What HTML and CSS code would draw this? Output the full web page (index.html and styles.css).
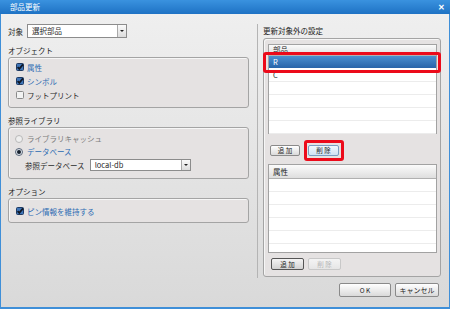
FILE: index.html
```html
<!DOCTYPE html>
<html lang="ja">
<head>
    <meta charset="UTF-8">
    <title>部品更新</title>
    <link rel="stylesheet" href="styles.css">
</head>
<body>
    <div class="window">
        <div class="titlebar">
            <span class="title">部品更新</span>
            <span class="close">✕</span>
        </div>

        <div class="content">
            <!-- left side -->
            <div class="left">
                <div class="target-row">
                    <span class="text">対象</span>
                    <div class="select target-select">
                        <span class="select-value">選択部品</span>
                        <span class="drop"><span class="arrow"></span></span>
                    </div>
                </div>

                <div class="group-label">オブジェクト</div>
                <div class="group group-object">
                    <div class="item checked">
                        <svg class="check" width="8" height="8" viewBox="0 0 8 8"><rect x="0.5" y="0.5" width="7" height="7" rx="1" fill="#3f75b8" stroke="#1e3a63"/><path d="M1.6 4.1 L3.3 5.9 L7 1.4" fill="none" stroke="#0e1726" stroke-width="1.7"/></svg>
                        <span>属性</span>
                    </div>
                    <div class="item checked">
                        <svg class="check" width="8" height="8" viewBox="0 0 8 8"><rect x="0.5" y="0.5" width="7" height="7" rx="1" fill="#3f75b8" stroke="#1e3a63"/><path d="M1.6 4.1 L3.3 5.9 L7 1.4" fill="none" stroke="#0e1726" stroke-width="1.7"/></svg>
                        <span>シンボル</span>
                    </div>
                    <div class="item">
                        <svg class="check" width="8" height="8" viewBox="0 0 8 8"><rect x="0.5" y="0.5" width="7" height="7" rx="1" fill="#f2f2f2" stroke="#8a8a8a"/></svg>
                        <span>フットプリント</span>
                    </div>
                </div>

                <div class="group-label">参照ライブラリ</div>
                <div class="group group-library">
                    <div class="item radio disabled">
                        <svg class="check" width="8" height="8" viewBox="0 0 8 8"><circle cx="4" cy="4" r="3.5" fill="#eeeeee" stroke="#b8b8b8"/></svg>
                        <span>ライブラリキャッシュ</span>
                    </div>
                    <div class="item radio checked">
                        <svg class="check" width="8" height="8" viewBox="0 0 8 8"><circle cx="4" cy="4" r="3.5" fill="#dde3ea" stroke="#5a6678"/><circle cx="4" cy="4" r="2" fill="#16202e"/></svg>
                        <span>データベース</span>
                    </div>
                    <div class="db-row">
                        <span class="text">参照データベース</span>
                        <div class="select db-select">
                            <span class="select-value">local-db</span>
                            <span class="drop"><span class="arrow"></span></span>
                        </div>
                    </div>
                </div>

                <div class="group-label">オプション</div>
                <div class="group group-option">
                    <div class="item checked">
                        <svg class="check" width="8" height="8" viewBox="0 0 8 8"><rect x="0.5" y="0.5" width="7" height="7" rx="1" fill="#3f75b8" stroke="#1e3a63"/><path d="M1.6 4.1 L3.3 5.9 L7 1.4" fill="none" stroke="#0e1726" stroke-width="1.7"/></svg>
                        <span>ピン情報を維持する</span>
                    </div>
                </div>
            </div>

            <!-- right side -->
            <div class="right">
                <div class="right-title">更新対象外の設定</div>
                <div class="group right-group">
                    <div class="list list-parts">
                        <div class="list-header">部品</div>
                        <div class="row selected">R</div>
                        <div class="row">C</div>
                        <div class="row"></div>
                        <div class="row"></div>
                        <div class="row"></div>
                        <div class="row"></div>
                        <div class="mark mark-row"></div>
                    </div>
                    <div class="btn-row btn-row-top">
                        <button class="btn small">追 加</button>
                        <button class="btn small hover">削 除<span class="mark mark-btn"></span></button>
                    </div>
                    <div class="list list-attr">
                        <div class="list-header">属性</div>
                        <div class="row"></div>
                        <div class="row"></div>
                        <div class="row"></div>
                        <div class="row"></div>
                        <div class="row"></div>
                        <div class="row"></div>
                    </div>
                    <div class="btn-row btn-row-bottom">
                        <button class="btn small pressed">追 加</button>
                        <button class="btn small" disabled>削 除</button>
                    </div>
                </div>
            </div>
        </div>

        <div class="footer">
            <button class="btn ok">O K</button>
            <button class="btn cancel">キャンセル</button>
        </div>
    </div>
</body>
</html>
```

FILE: styles.css
```css
/* dialog base */
html, body {
    margin: 0;
    padding: 0;
}

body {
    width: 450px;
    height: 309px;
    font-family: "Noto Sans CJK JP", "Noto Sans", sans-serif;
    font-size: 7.5px;
    color: #2b2b2b;
    overflow: hidden;
}

.window {
    width: 450px;
    height: 309px;
    box-sizing: border-box;
    border-left: 1px solid #3f8fd8;
    border-right: 1px solid #3f8fd8;
    border-bottom: 2px solid #3f8fd8;
    background: linear-gradient(#f0f0f0, #d9d9d9);
}

.titlebar {
    height: 14px;
    margin-left: -1px;
    margin-right: -1px;
    background: linear-gradient(#3a92df, #1e72c4);
    color: #fff;
    display: flex;
    align-items: center;
    justify-content: space-between;
    padding: 0 5px 0 10px;
}

.title {
    font-size: 7.5px;
    line-height: 14px;
}

.close {
    font-size: 8px;
    font-weight: bold;
    line-height: 14px;
}

.content {
    display: flex;
    padding: 10px 0 0 7px;
}

/* left column */
.left {
    width: 241px;
}

.target-row {
    display: flex;
    align-items: center;
    height: 14px;
    gap: 4px;
}

.text {
    white-space: nowrap;
}

.select {
    display: flex;
    align-items: center;
    box-sizing: border-box;
    background: #fff;
    border: 1px solid #8c8c8c;
    height: 14px;
}

.select-value {
    flex: 1;
    padding-left: 4px;
    line-height: 12px;
}

.drop {
    width: 9px;
    height: 12px;
    box-sizing: border-box;
    border-left: 1px solid #a9a9a9;
    background: linear-gradient(#fafafa, #dcdcdc);
    display: flex;
    align-items: center;
    justify-content: center;
}

.arrow {
    width: 0;
    height: 0;
    border-left: 2px solid transparent;
    border-right: 2px solid transparent;
    border-top: 2px solid #222;
}

.target-select {
    width: 100px;
}

.group-label {
    height: 10px;
    line-height: 10px;
    margin-top: 8px;
    margin-bottom: 1px;
    color: #222;
}

.group {
    box-sizing: border-box;
    border: 1px solid #a4a4a4;
    border-radius: 3px;
    background: #e5e2e2;
    box-shadow: inset 1px 1px 0 #f6f6f6;
}

.item {
    display: flex;
    align-items: center;
    gap: 3px;
    height: 14px;
    white-space: nowrap;
}

.check {
    flex: none;
}

.item.checked span {
    color: #2a6ab2;
}

.item.disabled span {
    color: #7d7d7d;
}

.group-object {
    padding: 2px 7px 5px 7px;
}

.group-library {
    padding: 4px 7px 6px 6px;
}

.group-library .item {
    height: 13px;
    gap: 4px;
}

.db-row {
    display: flex;
    align-items: center;
    height: 14px;
    padding-left: 10px;
    gap: 5px;
}

.db-select {
    width: 101px;
    height: 12px;
}

.db-select .drop {
    height: 10px;
}

.group-label:nth-of-type(3) {
    margin-top: 7px;
    margin-bottom: 0;
}

.group-option {
    padding: 5px 7px 4px 7px;
}

/* right column */
.right {
    width: 184px;
    box-sizing: border-box;
    margin-left: 8px;
    border-left: 1px solid #b4b4b4;
    padding: 2px 0 1px 5px;
}

.right-title {
    height: 10px;
    line-height: 10px;
    margin-bottom: 2px;
    color: #222;
}

.right-group {
    height: 239px;
    padding: 5px 3px 0 4px;
}

.list {
    position: relative;
    box-sizing: border-box;
    background: #fff;
    border: 1px solid #a2a2a2;
}

.list-header {
    box-sizing: border-box;
    padding-left: 4px;
    background: linear-gradient(#fbfbfb, #dedede);
    border-bottom: 1px solid #b0b0b0;
    color: #222;
}

.row {
    box-sizing: border-box;
    height: 13px;
    line-height: 12px;
    padding-left: 4px;
    border-bottom: 1px solid #ececec;
}

.row.selected {
    background: linear-gradient(#4a8fd0, #2864a9);
    color: #fff;
    border-bottom-color: #fff;
}

.list-parts {
    height: 90px;
}

.list-parts .list-header {
    height: 11px;
    line-height: 10px;
}

.list-attr {
    height: 89px;
    margin-top: 8px;
    overflow: hidden;
}

.list-attr .list-header {
    height: 14px;
    line-height: 13px;
}

.btn-row {
    display: flex;
    gap: 8px;
    padding-left: 2px;
}

.btn-row-top {
    margin-top: 11px;
}

.btn-row-bottom {
    margin-top: 5px;
    padding-left: 3px;
    gap: 4px;
}

.btn {
    position: relative;
    box-sizing: border-box;
    font-family: "Noto Sans CJK JP", "Noto Sans", sans-serif;
    font-size: 6.5px;
    color: #222;
    padding: 0;
    border: 1px solid #8a8a8a;
    border-radius: 2px;
    background: linear-gradient(#ffffff, #dadada);
}

.btn.small {
    width: 30px;
    height: 11px;
    line-height: 9px;
}

.btn-row-bottom .btn.small {
    width: 33px;
    height: 12px;
}

.btn.hover {
    width: 31px;
    background: linear-gradient(#f2f8fd, #cfe3f4);
    border-color: #7a9cc0;
}

.btn.pressed {
    border-color: #555;
    background: linear-gradient(#f4f4f4, #d2d2d2);
}

.btn:disabled {
    color: #b5b5b5;
    border-color: #c8c8c8;
    background: linear-gradient(#f4f4f4, #e6e6e6);
}

/* red highlight marks */
.mark {
    position: absolute;
    box-sizing: border-box;
    border: 3px solid #ec0a1a;
    border-radius: 3px;
    pointer-events: none;
}

.mark-row {
    left: -6px;
    top: 7px;
    width: 178px;
    height: 21px;
}

.mark-btn {
    left: -5px;
    top: -6px;
    width: 40px;
    height: 21px;
}

/* footer buttons */
.footer {
    display: flex;
    justify-content: flex-end;
    gap: 4px;
    padding-right: 10px;
    margin-top: 5px;
}

.btn.ok {
    width: 52px;
    height: 14px;
}

.btn.cancel {
    width: 44px;
    height: 14px;
    font-size: 7px;
}
```
